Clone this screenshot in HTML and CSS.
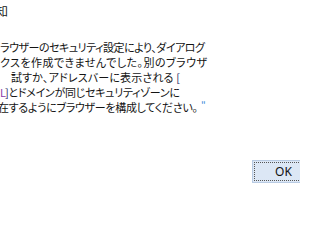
FILE: index.html
```html
<!DOCTYPE html>
<html lang="ja">
<head>
<meta charset="utf-8">
<link rel="stylesheet" href="styles.css">
</head>
<body>
<div class="dialog">
  <div class="title">知</div>
  <div class="message">
    <div class="line w1">ラウザーのセキュリティ設定により、ダイアログ</div>
    <div class="line w2">クスを作成できませんでした。別のブラウザ</div>
    <div class="line w3 indent">試すか、アドレスバーに表示される <span class="bracket">[</span></div>
    <div class="line w4"><span class="cut-l">L</span><span class="bracket">]</span>とドメインが同じセキュリティゾーンに</div>
    <div class="row">
      <div class="line w5 cut">在するようにブラウザーを構成してください。</div>
      <span class="quote">"</span>
    </div>
  </div>
  <div class="footer">
    <button class="ok">OK</button>
  </div>
</div>
</body>
</html>
```
FILE: styles.css
```css
html, body {
  margin: 0;
  padding: 0;
  background: #ffffff;
}
body {
  width: 300px;
  height: 200px;
  overflow: hidden;
  font-family: "Noto Sans CJK JP", "Noto Sans", sans-serif;
  color: #141414;
}
.dialog {
  display: flex;
  flex-direction: column;
  height: 200px;
}
.title {
  font-size: 12px;
  line-height: 15px;
  margin-top: 3px;
  margin-left: -4px;
  white-space: nowrap;
}
.message {
  margin-top: 22px;
  font-size: 11px;
  line-height: 15px;
  font-feature-settings: "palt";
  letter-spacing: -1px;
}
.line {
  white-space: nowrap;
  text-align: justify;
  text-align-last: justify;
  box-sizing: border-box;
}
.w1 { width: 204px; }
.w2 { width: 206px; }
.w3 { width: 179px; }
.w4 { width: 179px; }
.w5 { width: 199px; }
.indent {
  padding-left: 11px;
}
.cut {
  margin-left: -2px;
}
.row {
  display: flex;
  align-items: flex-start;
}
.cut-l {
  color: #8a3aa8;
}
.bracket {
  color: #1d2a66;
}
.quote {
  color: #3b8ad8;
  font-size: 10px;
  line-height: 12px;
  margin-left: 4px;
  letter-spacing: 0;
}
.footer {
  margin-top: 45px;
  padding-left: 252px;
  display: flex;
}
.ok {
  flex: none;
  width: 63px;
  height: 23px;
  padding: 0;
  margin: 0;
  font-family: "Noto Sans", "Liberation Sans", sans-serif;
  font-size: 12px;
  color: #111;
  background: #dce7f5;
  border: 1px solid #b9cbe3;
  outline: 1px dotted #555;
  outline-offset: -3px;
  border-radius: 0;
}
```
